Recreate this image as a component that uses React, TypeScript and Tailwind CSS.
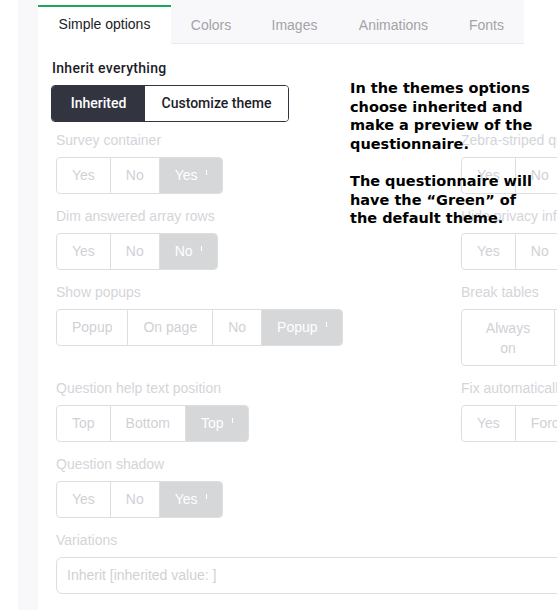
const tabs = [
  { label: "Simple options", w: "w-[133px]" },
  { label: "Colors", w: "w-[80px]" },
  { label: "Images", w: "w-[87px]" },
  { label: "Animations", w: "w-[111px]" },
  { label: "Fonts", w: "w-[75px]" },
];

type Field = {
  label: string;
  options: string[];
  wrapFirst?: boolean;
};

const rows: [Field, Field][] = [
  [
    { label: "Survey container", options: ["Yes", "No", "Yes"] },
    { label: "Zebra-striped questions", options: ["Yes", "No", "No"] },
  ],
  [
    { label: "Dim answered array rows", options: ["Yes", "No", "No"] },
    { label: "Hide privacy info", options: ["Yes", "No", "No"] },
  ],
  [
    { label: "Show popups", options: ["Popup", "On page", "No", "Popup"] },
    { label: "Break tables", options: ["Always on", "Desktop only", "Off", "Off"], wrapFirst: true },
  ],
  [
    { label: "Question help text position", options: ["Top", "Bottom", "Top"] },
    { label: "Fix automatically numbering", options: ["Yes", "Forced", "No", "No"] },
  ],
  [
    { label: "Question shadow", options: ["Yes", "No", "Yes"] },
    { label: "", options: [] },
  ],
];

export default function App() {
  return (
    <div className="relative flex h-[610px] w-[557px] overflow-hidden bg-white font-['Liberation_Sans',Arial,sans-serif]">
      <div className="w-[18px] shrink-0 bg-white" />
      <div className="w-[20px] shrink-0 bg-[#f8f8fa]" />

      <div className="w-[900px] shrink-0">
        {/* Tabs */}
        <div className="flex h-[44px] w-[486px]">
          {tabs.map((t, i) =>
            i === 0 ? (
              <div key={t.label} className={`flex flex-col bg-white ${t.w}`}>
                <div className="mt-[5px] h-[2px] bg-[#19a85e]" />
                <div className="flex flex-1 items-center justify-center pb-[2px] text-[14px] text-[#1c1d28]">{t.label}</div>
              </div>
            ) : (
              <div
                key={t.label}
                className={`flex items-center justify-center border-b border-[#e8e8ee] bg-[#f8f8fa] pt-[7px] text-[14px] text-[#a3a3a8] ${t.w}`}
              >
                {t.label}
              </div>
            )
          )}
        </div>

        {/* Content */}
        <div className="pl-[13px] pt-[14px]">
          <div className="pl-px font-['Roboto',sans-serif] text-[14px] font-medium leading-[20px] tracking-[0.3px] text-[#1c1d28]">
            Inherit everything
          </div>
          <div className="mt-[7px] flex h-[37px] w-[238px] overflow-hidden rounded-[4px] border border-[#32343f] font-['Roboto',sans-serif] text-[14px] font-medium">
            <div className="flex w-[93px] items-center justify-center bg-[#32343f] text-white">Inherited</div>
            <div className="flex flex-1 items-center justify-center bg-white text-[#1c1d28]">Customize theme</div>
          </div>

          <div className="ml-[5px] mt-[8px] grid grid-cols-[405px_405px] gap-y-[12px]">
            {rows.map((pair, r) =>
              pair.map((f, c) => <FieldBlock key={`${r}-${c}`} field={f} />)
            )}
            <div className="col-span-2">
              <div className="text-[14px] leading-[20px] text-[#d4d5d9]">Variations</div>
              <div className="mt-[7px] flex h-[37px] w-[600px] items-center rounded-[6px] border border-[#dedede] pl-[10px] text-[14px] text-[#d0d1d5]">
                Inherit [inherited value: ]
              </div>
            </div>
          </div>
        </div>
      </div>

      {/* Annotation */}
      <div className="absolute left-[350px] top-[79px] font-['DejaVu_Sans',sans-serif] text-[14.5px] font-bold leading-[18.6px] text-black">
        In the themes options
        <br />
        choose inherited and
        <br />
        make a preview of the
        <br />
        questionnaire.
        <br />
        <br />
        The questionnaire will
        <br />
        have the “Green” of
        <br />
        the default theme.
      </div>
    </div>
  );
}

function FieldBlock({ field }: { field: Field }) {
  if (!field.label) return <div />;
  const last = field.options.length - 1;
  return (
    <div>
      <div className="whitespace-nowrap text-[14px] leading-[20px] text-[#d4d5d9]">{field.label}</div>
      <div className="mt-[7px] flex w-max overflow-hidden rounded-[4px] border border-[#dedede] text-[14px]">
        {field.options.map((o, i) => {
          const selected = i === last;
          if (field.wrapFirst && i === 0) {
            return (
              <div
                key={i}
                className="flex h-[55px] w-[92px] items-center justify-center px-[15px] text-center leading-[20px] text-[#d0d1d5]"
              >
                {o}
              </div>
            );
          }
          return (
            <div
              key={i}
              className={[
                "flex items-center justify-center px-[15px]",
                field.wrapFirst ? "h-[55px]" : "h-[35px]",
                i > 0 ? "border-l border-[#dedede]" : "",
                selected ? "bg-[#d6d7d9] text-white" : "text-[#d0d1d5]",
              ].join(" ")}
            >
              {o}
              {selected && <span className="relative -top-[3px] ml-[8px] inline-block h-[5px] w-px bg-white" />}
            </div>
          );
        })}
      </div>
    </div>
  );
}
